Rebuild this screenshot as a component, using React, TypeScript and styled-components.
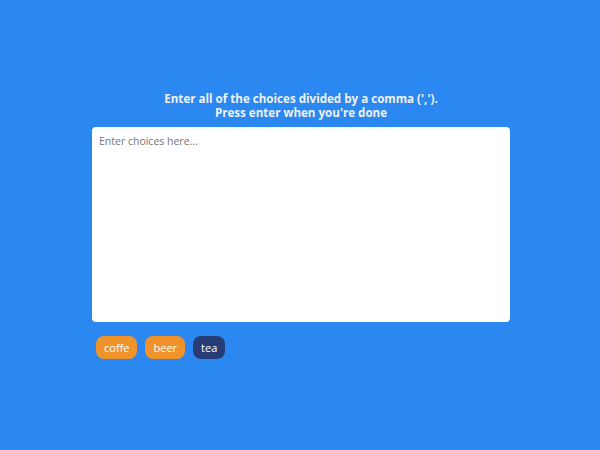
import React from "react";
import styled, { createGlobalStyle } from "styled-components";

const Global = createGlobalStyle`
  * { box-sizing: border-box; }
  html, body { margin: 0; padding: 0; }
  body {
    background: #2b88f0;
    font-family: "Open Sans", "Noto Sans", sans-serif;
  }
`;

const Page = styled.div`
  width: 600px;
  height: 450px;
  padding: 0 0 0 2px;
  display: flex;
  align-items: center;
  justify-content: center;
`;

const Container = styled.div`
  width: 418px;
  display: flex;
  flex-direction: column;
`;

const Heading = styled.h3`
  margin: 0 0 7px;
  color: #f0f0f0;
  font-size: 11.6px;
  font-weight: 700;
  line-height: 14px;
  text-align: center;
`;

const TextArea = styled.textarea`
  display: block;
  width: 100%;
  height: 195px;
  border: none;
  border-radius: 4px;
  padding: 7px 7px;
  margin: 0 0 14px;
  font-family: "Open Sans", "Noto Sans", sans-serif;
  font-size: 10.5px;
  resize: none;
  outline: none;
  &::placeholder { color: #757575; }
`;

const Tags = styled.div`
  display: flex;
  padding-left: 4px;
  gap: 8px;
`;

const Tag = styled.span<{ $highlight?: boolean }>`
  display: inline-flex;
  align-items: center;
  height: 23px;
  padding: 0 8px;
  border-radius: 8px;
  background: ${(p) => (p.$highlight ? "#273c75" : "#f0932b")};
  color: #fff;
  font-size: 11px;
`;

export default function App() {
  return (
    <>
      <Global />
      <Page>
        <Container>
          <Heading>
            Enter all of the choices divided by a comma (',').
            <br />
            Press enter when you're done
          </Heading>
          <TextArea placeholder="Enter choices here..." />
          <Tags>
            <Tag>coffe</Tag>
            <Tag>beer</Tag>
            <Tag $highlight>tea</Tag>
          </Tags>
        </Container>
      </Page>
    </>
  );
}
